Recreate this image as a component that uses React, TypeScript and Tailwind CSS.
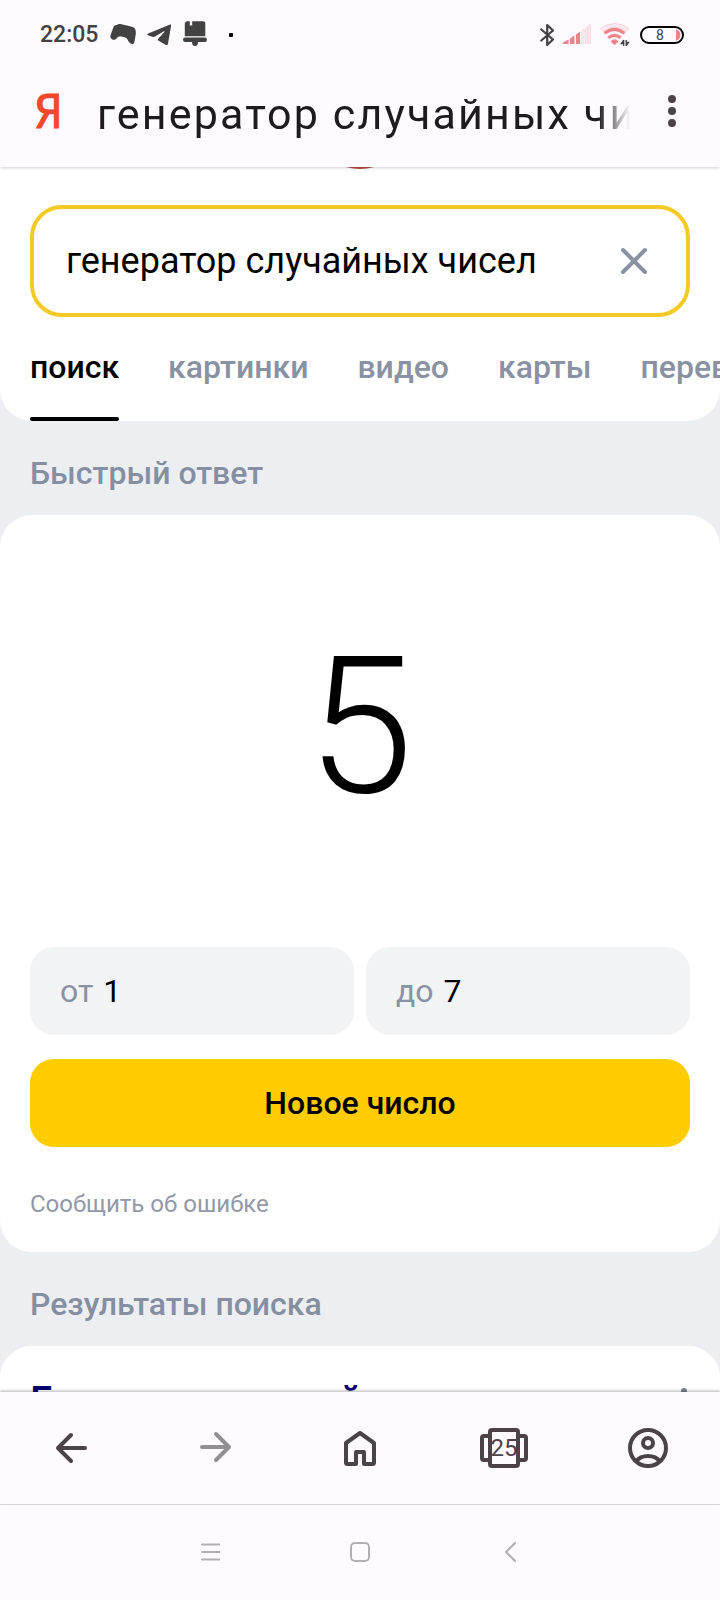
import React, { useState } from "react";

const tabs = ["поиск", "картинки", "видео", "карты", "переводчик"];

function StatusBar() {
  return (
    <div className="flex h-[70px] items-center pl-10 pr-9 text-[#424242]">
      <span className="text-[23px] leading-7 font-medium">22:05</span>
      <svg className="ml-3 h-6 w-[26px]" viewBox="0 0 26 24" fill="currentColor">
        <path d="M7 2C8 .8 10 .8 11.500 1.200L22 3.700C25.500 4.700 26 7.500 25.800 11L24.500 18.500C24 21 22.500 21.800 21 20.800C19 19.500 18.500 18.500 17.500 16.500C16.500 14.500 14.500 14.200 12.500 13.800C10 13.300 8.500 13 7 15C5.500 17 3.500 17.300 2 16.300C0 15.200 .2 13.500 .8 11.500L3.300 4.500C4 2.500 5.500 2 7 2Z" />
      </svg>
      <svg className="ml-[11px] h-6 w-6" viewBox="0 0 24 24" fill="currentColor">
        <path d="M22.500 1.700C24 1.200 24.300 2 24 3.500L21 20.500C20.700 22.200 19.800 22.500 18.500 21.700L11.300 17.500C10.700 17 10.700 16.500 11.300 15.800L17.300 9C17.800 8.300 17.300 8 16.500 8.500L8 13.500C7 14 6.300 14 5.300 13.700L1 12.300C-.2 11.900-.1 11 1.200 10.400Z" />
      </svg>
      <svg className="ml-3 h-7 w-6" viewBox="0 0 24 28" fill="currentColor">
        <path d="M4.500 .3H6.800V5L8 4L9.200 5V.3H20A2.300 2.300 0 0 1 22.300 2.600V15.300H1.800V3A2.700 2.700 0 0 1 4.500 .3Z" />
        <path d="M2.200 16.600H21.800A2.200 2.200 0 0 1 21.800 21H15A3 4 0 0 1 9 21H2.200A2.200 2.200 0 0 1 2.200 16.600Z" />
      </svg>
      <span className="ml-[22px] size-1 rounded-[1px] bg-black" />

      <svg className="ml-auto h-6 w-[14px]" viewBox="0 0 14 24" fill="none" stroke="currentColor" strokeWidth="2.200" strokeLinecap="round" strokeLinejoin="round">
        <path d="M1.300 6.500L13 16.500L7.200 22V2L13 7.500L1.300 17.500" />
      </svg>
      <svg className="ml-[9px] h-6 w-7" viewBox="0 0 28 24">
        <path d="M0 21V19.500L5.500 16.500V21ZM7 21V15.500L11.500 12.500V21ZM13 21V11.500L17 8.500V21Z" fill="#ee8388" />
        <path d="M18.500 20.600V8L21 6V20.600ZM22.500 20.600V5L24.500 3.500V20.600ZM25.500 20.600V2.500L27.500 1.500V20.600Z" fill="#fdeaf0" stroke="#f8d5dc" strokeWidth=".8" />
      </svg>
      <svg className="ml-[9px] h-6 w-[30px]" viewBox="0 0 30 24" fill="none" stroke="#ee8388">
        <path d="M.5 5.500Q14.500-4.500 29 5.500L26.500 8.500Q14.500-.5 3 8.500Z" fill="#fdeaf0" stroke="#f6c9d0" strokeWidth=".8" />
        <path d="M4.500 10.300Q14.500 2.500 24.500 10.300M8.300 14.800Q14.500 10 20.700 14.800" strokeWidth="3" />
        <path d="M11.500 18.500Q14.500 15.800 17.500 18.500L14.500 21.300Z" fill="#ee8388" strokeWidth="1.500" strokeLinejoin="round" />
        <path d="M23.700 17V23M23.500 17.500L21.300 20.500H24M26.200 17V23M26.500 22.300L28.500 19.500H26" stroke="#424242" strokeWidth="1.300" />
      </svg>
      <span className="relative ml-[10px] flex h-[18px] w-11 items-center justify-center overflow-hidden rounded-full border-2 border-black pr-1 text-[14px] leading-4">
        8
        <svg className="absolute inset-y-0 right-0 h-full w-[6px]" viewBox="0 0 6 14" fill="#ee8388">
          <path d="M0 1.500Q4 2 4.500 7Q4 12 0 12.500Z" />
        </svg>
      </span>
    </div>
  );
}

function BottomBar() {
  return (
    <nav className="relative grid h-28 shrink-0 grid-cols-5 bg-[#fefaff] text-[#4b4347] shadow-[0_-1px_3px_rgba(0,0,0,0.3)]">
      <button aria-label="Назад" className="flex items-center justify-center">
        <svg className="size-9" viewBox="0 0 36 36" fill="none" stroke="currentColor" strokeWidth="4" strokeLinecap="round" strokeLinejoin="round">
          <path d="M31 18H4M17 5L4 18L17 31" />
        </svg>
      </button>
      <button aria-label="Вперёд" className="flex items-center justify-center text-[#938e93]">
        <svg className="size-9" viewBox="0 0 36 36" fill="none" stroke="currentColor" strokeWidth="4" strokeLinecap="round" strokeLinejoin="round">
          <path d="M4 17H31M18 4L31 17L18 30" />
        </svg>
      </button>
      <button aria-label="Домой" className="flex items-center justify-center">
        <svg className="size-10" viewBox="0 0 40 40" fill="none" stroke="currentColor" strokeWidth="4" strokeLinejoin="round">
          <path d="M6 15L20 5L34 15V34.500Q34 36 32.500 36H24V24H16V36H7.500Q6 36 6 34.500Z" />
        </svg>
      </button>
      <button aria-label="Вкладки" className="relative flex items-center justify-center">
        <svg className="h-10 w-12" viewBox="0 0 48 40" fill="none" stroke="currentColor" strokeWidth="4">
          <rect x="10" y="2" width="28" height="36" rx="2" />
          <path d="M10 8H4Q2 8 2 10V30Q2 32 4 32H10M38 8H44Q46 8 46 10V30Q46 32 44 32H38" />
        </svg>
        <span className="absolute text-2xl">25</span>
      </button>
      <button aria-label="Профиль" className="flex items-center justify-center">
        <svg className="size-10" viewBox="0 0 40 40" fill="none" stroke="currentColor" strokeWidth="4">
          <circle cx="20" cy="20" r="18" />
          <circle cx="20" cy="15" r="5" />
          <path d="M8 33.500Q12 28 20 28Q28 28 32 33.500" />
        </svg>
      </button>
    </nav>
  );
}

function SystemBar() {
  return (
    <div className="flex h-24 shrink-0 items-center justify-center gap-[130px] border-t border-[#e4e0e5] bg-[#fefaff] pb-[2px] text-[#b3aeb3]">
      <button aria-label="Недавние">
        <svg className="size-5" viewBox="0 0 20 20" stroke="currentColor" strokeWidth="2" strokeLinecap="round">
          <path d="M2 2.500H20M2 10H20M2 17.500H20" />
        </svg>
      </button>
      <button aria-label="Главный экран">
        <svg className="size-5" viewBox="0 0 20 20" fill="none" stroke="currentColor" strokeWidth="2">
          <rect x="1" y="1" width="18" height="18" rx="4" />
        </svg>
      </button>
      <button aria-label="Вернуться">
        <svg className="size-5" viewBox="0 0 20 20" fill="none" stroke="currentColor" strokeWidth="2" strokeLinecap="round" strokeLinejoin="round">
          <path d="M15 1L6 10L15 19" />
        </svg>
      </button>
    </div>
  );
}

export default function App() {
  const [query, setQuery] = useState("генератор случайных чисел");
  const [from, setFrom] = useState("1");
  const [to, setTo] = useState("7");
  const [result, setResult] = useState(5);

  const roll = () => {
    const min = Number(from);
    const max = Number(to);
    setResult(min + Math.floor(Math.random() * (max - min + 1)));
  };

  return (
    <div className="flex h-screen flex-col bg-[#edeef2] font-[Roboto,sans-serif] text-black">
      {/* Browser header */}
      <header className="relative z-10 shrink-0 bg-[#fefaff] pb-[9px] shadow-[0_1px_3px_rgba(0,0,0,0.2)]">
        <StatusBar />
        <div className="flex h-[88px] items-center pl-9 pr-6">
          <span className="flex w-6 shrink-0 justify-center pb-1 font-['DejaVu_Sans_Condensed',Roboto,sans-serif] text-[46px] leading-[56px] text-[#f1482a] [-webkit-text-stroke:1px_#f1482a]">Я</span>
          <p className="ml-[37px] min-w-0 flex-1 overflow-hidden whitespace-nowrap text-[43px] leading-[56px] tracking-wider text-[#1d1b1e] [mask-image:linear-gradient(to_right,black_94%,transparent)]">
            {query}
          </p>
          <button aria-label="Меню" className="ml-[18px] flex size-12 shrink-0 items-center justify-center pb-[6px] text-[#4b4347]">
            <svg className="h-8 w-2" viewBox="0 0 8 32" fill="currentColor">
              <circle cx="4" cy="4" r="4" />
              <circle cx="4" cy="16" r="4" />
              <circle cx="4" cy="28" r="4" />
            </svg>
          </button>
        </div>
      </header>

      <main className="min-h-0 flex-1 overflow-y-auto [scrollbar-width:none]">
        {/* Search box and tabs */}
        <section className="relative overflow-hidden rounded-b-[32px] bg-white px-[30px] pt-[38px]">
          <svg className="absolute left-1/2 top-0 h-[2px] w-7 -translate-x-1/2" viewBox="0 0 28 2" fill="#b94a3f">
            <path d="M0 0H28Q14 4 0 0Z" />
          </svg>
          <div className="flex h-28 items-center rounded-[32px] border-4 border-[#f3ca25] pl-8 pr-[38px]">
            <input
              aria-label="Запрос"
              value={query}
              onChange={(e) => setQuery(e.target.value)}
              className="min-w-0 flex-1 text-4xl outline-none"
            />
            <button aria-label="Очистить" onClick={() => setQuery("")} className="text-[#8a91a3]">
              <svg className="size-7" viewBox="0 0 28 28" stroke="currentColor" strokeWidth="4" strokeLinecap="round">
                <path d="M3 3L25 25M25 3L3 25" />
              </svg>
            </button>
          </div>
          <div className="flex h-[104px] gap-[49px] whitespace-nowrap text-[32px] font-medium text-[#8a91a3]">
            {tabs.map((tab, idx) => (
              <a
                key={tab}
                href="#"
                className={idx === 0 ? "relative flex items-center pb-1 text-black" : "flex items-center pb-1"}
              >
                {tab}
                {idx === 0 && <span className="absolute inset-x-0 bottom-0 h-1 rounded-full bg-black" />}
              </a>
            ))}
          </div>
        </section>

        <h2 className="flex h-[94px] items-center px-[30px] pt-[10px] text-[32px] font-medium text-[#868fa2]">Быстрый ответ</h2>

        {/* Random number card */}
        <section className="rounded-[32px] bg-white px-[30px]">
          <output className="flex h-[432px] items-center justify-center pb-2 text-[192px] font-light leading-none">{result}</output>
          <div className="grid grid-cols-2 gap-3 text-[32px]">
            <label className="flex h-[88px] items-center gap-[10px] rounded-3xl bg-[#f2f3f5] px-[30px] text-[#8a91a3]">
              от
              <input value={from} onChange={(e) => setFrom(e.target.value)} className="min-w-0 flex-1 text-black outline-none" />
            </label>
            <label className="flex h-[88px] items-center gap-[10px] rounded-3xl bg-[#f2f3f5] px-[30px] text-[#8a91a3]">
              до
              <input value={to} onChange={(e) => setTo(e.target.value)} className="min-w-0 flex-1 text-black outline-none" />
            </label>
          </div>
          <button onClick={roll} className="mt-6 h-[88px] w-full rounded-3xl bg-[#ffcc00] text-[32px] font-medium">
            Новое число
          </button>
          <div className="flex h-[105px] items-center pt-2">
            <a href="#" className="text-2xl text-[#9298a8]">Сообщить об ошибке</a>
          </div>
        </section>

        <h2 className="flex h-[94px] items-center px-[30px] pt-[10px] text-[32px] font-medium text-[#868fa2]">Результаты поиска</h2>

        {/* First result */}
        <section className="flex items-start justify-between rounded-t-[32px] bg-white px-[30px] pt-8">
          <a href="#" className="text-[40px] font-medium leading-[48px] text-[#000070]">Генератор случайных</a>
          <button aria-label="Ещё" className="mt-2 text-[#7d8291]">
            <svg className="h-[30px] w-[12px]" viewBox="0 0 12 30" fill="currentColor">
              <circle cx="6" cy="5" r="3" />
              <circle cx="6" cy="15" r="3" />
              <circle cx="6" cy="25" r="3" />
            </svg>
          </button>
        </section>
      </main>

      <BottomBar />
      <SystemBar />
    </div>
  );
}
